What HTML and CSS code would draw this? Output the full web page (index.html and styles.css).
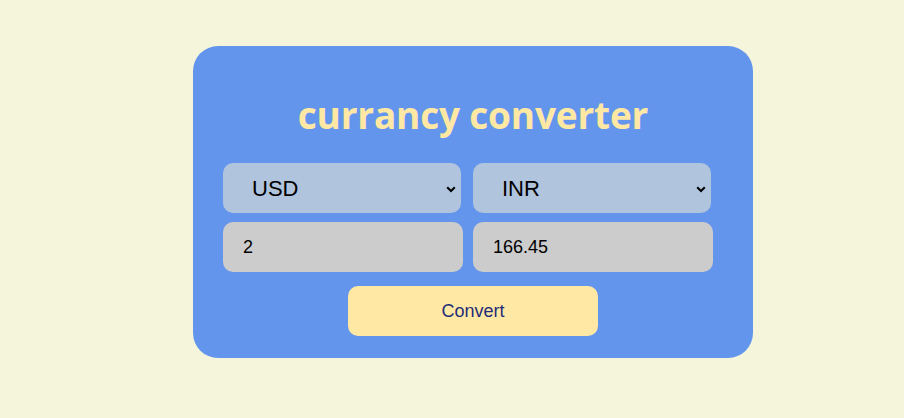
FILE: index.html
```html
<!DOCTYPE html>
<html>
<head>
<meta charset="utf-8">
<link rel="stylesheet" href="styles.css">
</head>
<body>
<div class="page">
  <div class="card">
    <h1 class="title">currancy converter</h1>
    <div class="row row-selects">
      <select class="cur">
        <option>USD</option>
      </select>
      <select class="cur">
        <option>INR</option>
      </select>
    </div>
    <div class="row row-inputs">
      <input class="amt" type="text" value="2">
      <input class="amt" type="text" value="166.45">
    </div>
    <div class="actions">
      <button class="btn">Convert</button>
    </div>
  </div>
</div>
</body>
</html>
```

FILE: styles.css
```css
html, body {
  margin: 0;
  padding: 0;
  background: #f5f5dc;
}
.page {
  padding: 46px 0 0 193px;
}
.card {
  box-sizing: border-box;
  width: 560px;
  height: 312px;
  background: #6495ed;
  border-radius: 25px;
  padding: 47px 30px 22px 30px;
}
.title {
  margin: 0 0 26px 0;
  height: 44px;
  line-height: 44px;
  text-align: center;
  font-family: "Open Sans", sans-serif;
  font-weight: 700;
  font-size: 37px;
  color: #ffe8a3;
  letter-spacing: -0.2px;
}
.row {
  display: flex;
}
.row-selects {
  gap: 12px;
  margin-bottom: 9px;
}
.row-inputs {
  gap: 10px;
}
.cur {
  box-sizing: border-box;
  width: 238px;
  height: 50px;
  border: none;
  border-radius: 10px;
  -webkit-appearance: none;
  appearance: none;
  background-color: #b0c4de;
  background-image: url("data:image/svg+xml,%3Csvg xmlns='http://www.w3.org/2000/svg' width='10' height='7' viewBox='0 0 10 7'%3E%3Cpolyline points='1.2,1.2 5,5 8.8,1.2' fill='none' stroke='%23000' stroke-width='2'/%3E%3C/svg%3E");
  background-repeat: no-repeat;
  background-position: right 5px top 23px;
  background-size: 10px 7px;
  font-family: "Liberation Sans", Arial, sans-serif;
  font-size: 22px;
  color: #000;
  padding: 0 20px 0 29px;
}
.amt {
  box-sizing: border-box;
  width: 240px;
  height: 50px;
  border: none;
  border-radius: 10px;
  background: #cccccc;
  font-family: "Liberation Sans", Arial, sans-serif;
  font-size: 18px;
  color: #000;
  padding: 0 20px;
  outline: none;
}
.actions {
  display: flex;
  justify-content: center;
  margin-top: 14px;
}
.btn {
  width: 250px;
  height: 50px;
  border: none;
  border-radius: 10px;
  background: #ffe8a3;
  color: #232c78;
  font-family: "Liberation Sans", Arial, sans-serif;
  font-size: 18px;
}
```
